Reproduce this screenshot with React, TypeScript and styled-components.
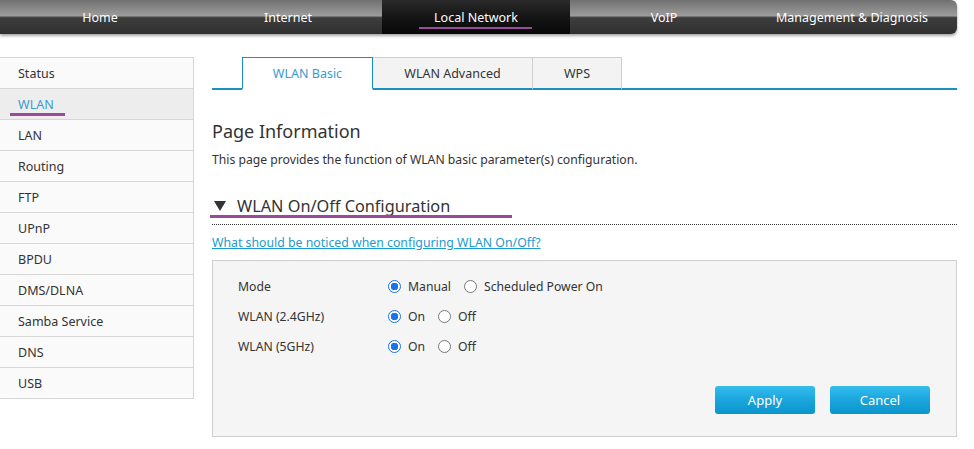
import React, { useState } from "react";
import styled, { createGlobalStyle } from "styled-components";

const GlobalStyle = createGlobalStyle`
  body {
    margin: 0;
    background: #fff;
    font-family: "Noto Sans", "Open Sans", sans-serif;
    color: #333;
  }
`;

const Page = styled.div`
  width: 974px;
  height: 449px;
  overflow: hidden;
`;

const TopBar = styled.div`
  display: flex;
  width: 957px;
  height: 34px;
  padding-left: 6px;
  box-sizing: border-box;
  border-radius: 0 6px 6px 0;
  background: linear-gradient(to bottom, #707070 0%, #9c9c9c 46%, #3e3e3e 52%, #2f2f2f 100%);
  box-shadow: 0 2px 3px rgba(0, 0, 0, 0.35);
`;

const NavItem = styled.div<{ $active?: boolean }>`
  position: relative;
  width: 188px;
  display: flex;
  align-items: center;
  justify-content: center;
  color: #fff;
  font-size: 12.5px;
  background: ${(p) => (p.$active ? "linear-gradient(to bottom, #2a2a2a 0%, #151515 50%, #080808 100%)" : "transparent")};
`;

const Marker = styled.span`
  position: relative;
  &::after {
    content: "";
    position: absolute;
    left: -15px;
    right: -14px;
    bottom: -3px;
    height: 2px;
    background: #9b4a9b;
  }
`;

const Body = styled.div`
  display: flex;
  margin-top: 23px;
`;

const SideNav = styled.ul`
  list-style: none;
  margin: 0;
  padding: 0;
  width: 194px;
  border: 1px solid #d6d6d6;
  border-left: none;
  border-bottom: none;
  box-sizing: border-box;
  align-self: flex-start;
`;

const SideItem = styled.li<{ $active?: boolean }>`
  height: 31px;
  box-sizing: border-box;
  border-bottom: 1px solid #d6d6d6;
  padding-left: 18px;
  display: flex;
  align-items: center;
  font-size: 12.5px;
  color: ${(p) => (p.$active ? "#3b9bd1" : "#333")};
  background: ${(p) => (p.$active ? "#ededed" : "#fafafa")};
  position: relative;
`;

const SideMarker = styled.span`
  position: absolute;
  left: 10px;
  width: 55px;
  bottom: 3px;
  height: 3px;
  background: #9b4a9b;
`;

const Main = styled.div`
  flex: 1;
  margin-left: 18px;
  margin-right: 17px;
`;

const Tabs = styled.div`
  display: flex;
  padding-left: 30px;
  border-bottom: 2px solid #1b8fbf;
  height: 31px;
`;

const Tab = styled.div<{ $active?: boolean; $w: number }>`
  width: ${(p) => p.$w}px;
  box-sizing: border-box;
  display: flex;
  align-items: center;
  justify-content: center;
  font-size: 12.5px;
  margin-bottom: -2px;
  color: ${(p) => (p.$active ? "#3b9bd1" : "#333")};
  background: ${(p) => (p.$active ? "#fff" : "#f3f3f3")};
  border: 1px solid ${(p) => (p.$active ? "#1b8fbf" : "#cfcfcf")};
  border-bottom: ${(p) => (p.$active ? "2px solid #fff" : "2px solid #1b8fbf")};
  & + & {
    border-left: none;
  }
`;

const Title = styled.h2`
  margin: 29px 0 0;
  font-size: 18px;
  font-weight: normal;
  color: #333;
  line-height: 24px;
`;

const Desc = styled.p`
  margin: 8px 0 0;
  font-size: 12.2px;
  color: #333;
  line-height: 18px;
`;

const SectionHead = styled.div`
  margin-top: 27px;
  height: 29px;
  box-sizing: border-box;
  border-bottom: 1px dotted #333;
  display: flex;
  align-items: flex-start;
  position: relative;
  font-size: 16.3px;
  line-height: 20px;
  color: #333;
`;

const Arrow = styled.span`
  width: 0;
  height: 0;
  border-left: 6px solid transparent;
  border-right: 6px solid transparent;
  border-top: 10px solid #333;
  margin: 5px 11px 0 2px;
`;

const SectionMarker = styled.span`
  position: absolute;
  left: -2px;
  width: 302px;
  bottom: 6px;
  height: 3px;
  background: #9b4a9b;
`;

const HelpLink = styled.a`
  display: block;
  margin-top: 9px;
  font-size: 12.3px;
  color: #1a9bd0;
  text-decoration: underline;
  line-height: 18px;
`;

const ConfigBox = styled.div`
  margin-top: 8px;
  height: 177px;
  box-sizing: border-box;
  background: #f5f5f5;
  border: 1px solid #cfcfcf;
  padding: 10px 25px 0;
  display: flex;
  flex-direction: column;
`;

const FieldRow = styled.div`
  display: flex;
  align-items: center;
  height: 30px;
  font-size: 12.2px;
`;

const Label = styled.div`
  width: 150px;
`;

const Option = styled.label`
  display: flex;
  align-items: center;
  margin-right: 13px;
  cursor: pointer;
`;

const Radio = styled.input.attrs({ type: "radio" })`
  appearance: none;
  width: 13px;
  height: 13px;
  margin: 0 7px 0 0;
  border-radius: 50%;
  border: 1px solid #777;
  background: #fff;
  box-sizing: border-box;
  &:checked {
    border: 1px solid #1a73e8;
    background: radial-gradient(circle, #1a73e8 0 3.5px, #fff 4px);
  }
`;

const Actions = styled.div`
  display: flex;
  justify-content: flex-end;
  gap: 15px;
  margin-top: 25px;
  margin-right: 1px;
`;

const Button = styled.button`
  width: 100px;
  height: 28px;
  border: none;
  border-radius: 3px;
  background: linear-gradient(to bottom, #35bdee 0%, #1aa5dc 50%, #0b95cd 100%);
  color: #fff;
  font-family: inherit;
  font-size: 13px;
`;

const menu = ["Home", "Internet", "Local Network", "VoIP", "Management & Diagnosis"];
const side = ["Status", "WLAN", "LAN", "Routing", "FTP", "UPnP", "BPDU", "DMS/DLNA", "Samba Service", "DNS", "USB"];

type Choice = { name: string; label: string; options: string[] };

const fields: Choice[] = [
  { name: "mode", label: "Mode", options: ["Manual", "Scheduled Power On"] },
  { name: "wlan24", label: "WLAN (2.4GHz)", options: ["On", "Off"] },
  { name: "wlan5", label: "WLAN (5GHz)", options: ["On", "Off"] },
];

export default function App() {
  const [values, setValues] = useState<Record<string, string>>({
    mode: "Manual",
    wlan24: "On",
    wlan5: "On",
  });

  return (
    <Page>
      <GlobalStyle />
      <TopBar>
        {menu.map((m) => (
          <NavItem key={m} $active={m === "Local Network"}>
            {m === "Local Network" ? <Marker>{m}</Marker> : m}
          </NavItem>
        ))}
      </TopBar>
      <Body>
        <SideNav>
          {side.map((s) => (
            <SideItem key={s} $active={s === "WLAN"}>
              {s}
              {s === "WLAN" && <SideMarker />}
            </SideItem>
          ))}
        </SideNav>
        <Main>
          <Tabs>
            <Tab $active $w={131}>WLAN Basic</Tab>
            <Tab $w={160}>WLAN Advanced</Tab>
            <Tab $w={89}>WPS</Tab>
          </Tabs>
          <Title>Page Information</Title>
          <Desc>This page provides the function of WLAN basic parameter(s) configuration.</Desc>
          <SectionHead>
            <Arrow />
            WLAN On/Off Configuration
            <SectionMarker />
          </SectionHead>
          <HelpLink href="#">What should be noticed when configuring WLAN On/Off?</HelpLink>
          <ConfigBox>
            {fields.map((f) => (
              <FieldRow key={f.name}>
                <Label>{f.label}</Label>
                {f.options.map((o) => (
                  <Option key={o}>
                    <Radio
                      name={f.name}
                      checked={values[f.name] === o}
                      onChange={() => setValues({ ...values, [f.name]: o })}
                    />
                    {o}
                  </Option>
                ))}
              </FieldRow>
            ))}
            <Actions>
              <Button>Apply</Button>
              <Button>Cancel</Button>
            </Actions>
          </ConfigBox>
        </Main>
      </Body>
    </Page>
  );
}
